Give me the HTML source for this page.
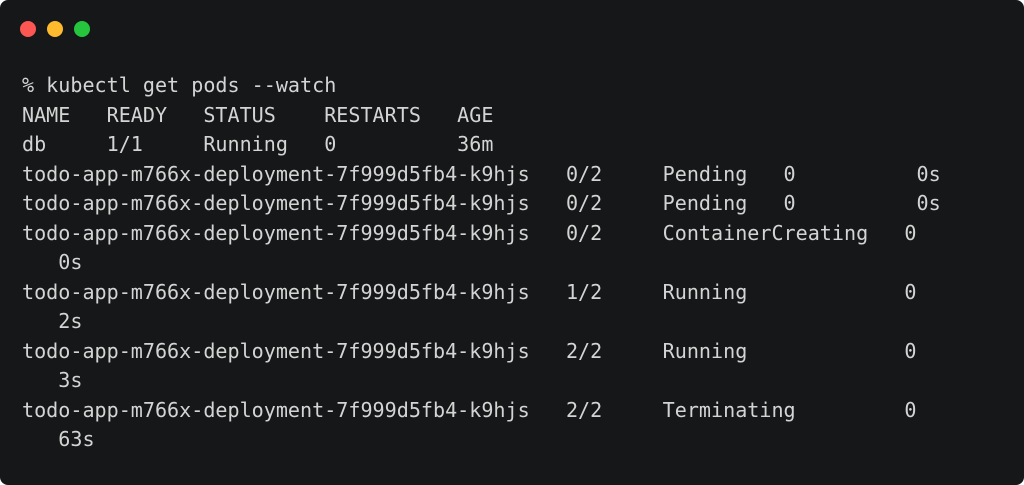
<!DOCTYPE html>
<html><head><style>
html,body{margin:0;padding:0;background:#fff;width:1024px;height:485px;overflow:hidden}
.win{position:absolute;left:0;top:0;width:1024px;height:485px;background:#151718;border-radius:8px}
.d{position:absolute;top:21px;width:16px;height:16px;border-radius:50%}
pre{position:absolute;left:22px;top:71px;margin:0;font-family:"DejaVu Sans Mono","Liberation Mono",monospace;font-size:20.08px;line-height:29.5px;color:#d4d4d4;white-space:pre}
</style></head><body>
<div class="win">
<div class="d" style="left:20px;background:#fd5754"></div>
<div class="d" style="left:47px;background:#febb2e"></div>
<div class="d" style="left:74px;background:#25c63e"></div>
<pre>% kubectl get pods --watch
NAME   READY   STATUS    RESTARTS   AGE
db     1/1     Running   0          36m
todo-app-m766x-deployment-7f999d5fb4-k9hjs   0/2     Pending   0          0s
todo-app-m766x-deployment-7f999d5fb4-k9hjs   0/2     Pending   0          0s
todo-app-m766x-deployment-7f999d5fb4-k9hjs   0/2     ContainerCreating   0
   0s
todo-app-m766x-deployment-7f999d5fb4-k9hjs   1/2     Running             0
   2s
todo-app-m766x-deployment-7f999d5fb4-k9hjs   2/2     Running             0
   3s
todo-app-m766x-deployment-7f999d5fb4-k9hjs   2/2     Terminating         0
   63s</pre>
</div>
</body></html>
